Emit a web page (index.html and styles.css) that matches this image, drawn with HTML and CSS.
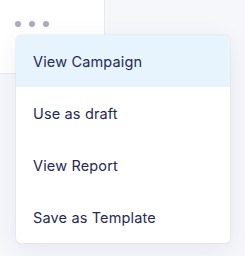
FILE: index.html
```html
<!DOCTYPE html>
<html>
<head>
<meta charset="utf-8">
<link rel="stylesheet" href="styles.css">
</head>
<body>
<div class="stage">
  <div class="card">
    <div class="dots"><span></span><span></span><span></span></div>
  </div>
  <ul class="menu">
    <li class="item active">View Campaign</li>
    <li class="item">Use as draft</li>
    <li class="item">View Report</li>
    <li class="item">Save as Template</li>
  </ul>
</div>
</body>
</html>
```
FILE: styles.css
```css
* { box-sizing: border-box; }
html, body { margin: 0; padding: 0; }
body {
  width: 245px;
  height: 256px;
  overflow: hidden;
  background: #f6f7fb;
  font-family: "Inter", "Lato", sans-serif;
}
.stage {
  position: relative;
  width: 245px;
  height: 256px;
}
.card {
  width: 105px;
  height: 74px;
  background: #ffffff;
  border-right: 1px solid #e8eaf0;
  border-bottom: 1px solid #e8eaf0;
  padding: 21px 0 0 15px;
}
.dots {
  display: flex;
  gap: 8px;
}
.dots span {
  width: 6px;
  height: 6px;
  border-radius: 50%;
  background: #a8acbd;
}
.menu {
  position: absolute;
  left: 16px;
  top: 35px;
  width: 214px;
  margin: 0;
  padding: 0;
  list-style: none;
  background: #ffffff;
  border-radius: 5px;
  box-shadow: 0 6px 24px rgba(40, 50, 90, 0.08), 0 0 0 1px rgba(40, 50, 90, 0.04);
  overflow: hidden;
}
.item {
  height: 52px;
  display: flex;
  align-items: center;
  padding-left: 17px;
  font-size: 14.5px;
  letter-spacing: 0.15px;
  font-weight: 400;
  color: #262a55;
}
.item.active {
  background: #e7f4fe;
}
```
